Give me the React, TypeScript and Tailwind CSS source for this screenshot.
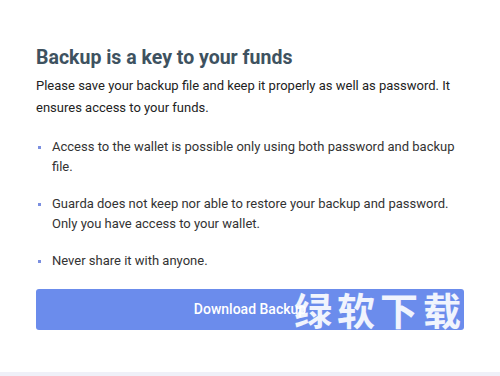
export default function App() {
  const points = [
    "Access to the wallet is possible only using both password and backup file.",
    "Guarda does not keep nor able to restore your backup and password. Only you have access to your wallet.",
    "Never share it with anyone.",
  ];
  return (
    <div className="w-[500px] h-[376px] bg-white flex flex-col font-['Roboto','Liberation_Sans',sans-serif] overflow-hidden">
      <div className="flex-1 px-[36px] pt-[44px]">
        <h1 className="text-[19.5px] leading-[28px] font-bold text-[#3e5260]">Backup is a key to your funds</h1>
        <p className="mt-[3px] text-[13px] leading-[22px] text-[#222]">
          Please save your backup file and keep it properly as well as password. It ensures access to your funds.
        </p>

        {/* points */}
        <ul className="mt-[18px] flex flex-col gap-[17px]">
          {points.map((p) => (
            <li key={p} className="flex text-[13px] leading-[20px] text-[#333]">
              <span className="w-[16px] shrink-0 pt-[9px] pl-[2px]">
                <span className="block w-[3px] h-[3px] bg-[#7b8fe0]" />
              </span>
              <span>{p}</span>
            </li>
          ))}
        </ul>

        <div className="relative mt-[18px] overflow-hidden">
          <button className="w-full h-[41px] rounded-[3px] bg-[#6b8cec] text-white text-[14px] font-medium">
            Download Backup
          </button>
          {/* watermark */}
          <span className="absolute left-[258px] top-[-3px] text-[38px] leading-[46px] tracking-[5px] font-bold text-white/90 font-['Noto_Sans_CJK_SC',sans-serif] whitespace-nowrap pointer-events-none">
            绿软下载站
          </span>
        </div>
      </div>
      <div className="h-[4px] bg-[#eff0f8]" />
    </div>
  );
}
